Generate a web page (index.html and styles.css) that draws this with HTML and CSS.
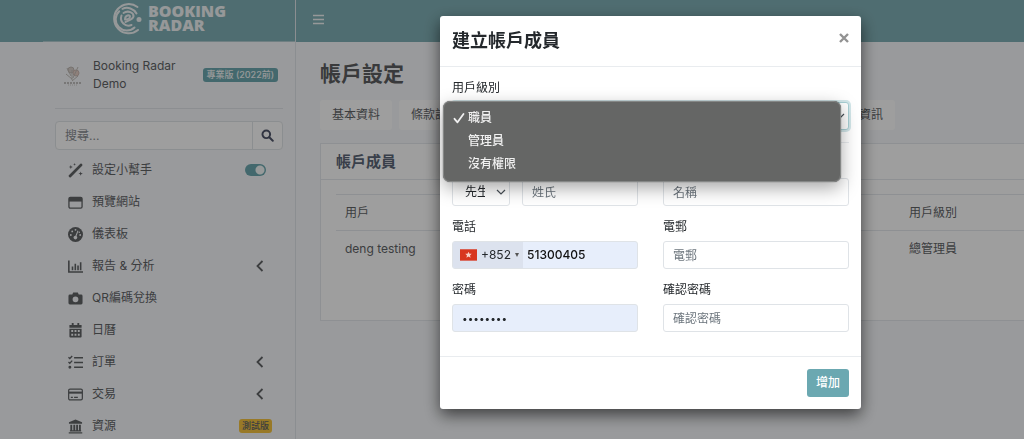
FILE: index.html
```html
<!DOCTYPE html>
<html lang="zh-Hant">
<head>
<meta charset="utf-8">
<title>帳戶設定 - Booking Radar</title>
<link rel="stylesheet" href="styles.css">
</head>
<body>
<div class="app">
  <aside class="sidebar">
    <div class="brand">
      <svg class="brand-mark" viewBox="0 0 30 33" fill="none" stroke="currentColor" stroke-width="2" stroke-linecap="round">
        <path d="M25.500 5A14.600 14.600 0 1 0 26 28"/>
        <path d="M10.500 6.800A11 11 0 0 1 24.500 11.500"/>
        <path d="M7.200 9.200A11 11 0 0 0 22.500 25.500"/>
        <path d="M11.500 11C16 8 22 10.500 21.500 14.500C21 17 17 18.500 13.500 20"/>
        <path d="M9.500 13.500A7.500 7.500 0 0 0 19.500 23"/>
        <path d="M13 17.500C13 13 18 12.500 18 14.500C18 16.500 15 17.500 13 17.500"/>
        <circle cx="27" cy="17.500" r="1.500" fill="currentColor"/>
      </svg>
      <span class="brand-name">BOOKING<br>RADAR</span>
    </div>
    <div class="side-body">
      <div class="profile">
        <svg class="avatar" viewBox="0 0 20 22" fill="none" stroke-width="1">
          <circle cx="8" cy="6" r="3" fill="#d8d0cb" stroke="#c1bab5"/>
          <circle cx="13" cy="9" r="3" fill="#e5cfc6" stroke="#cdbab3"/>
          <path d="M4 4l4 8M15 3l-5 11M3 10l6 5M9 6v10M15 12l-6 5" stroke="#c2bdb8"/>
          <path d="M1 19h18" stroke="#8d8783" stroke-dasharray="2 1"/>
          <path d="M5 21h10" stroke="#d0cbc8" stroke-dasharray="1 1"/>
        </svg>
        <span class="profile-name">Booking Radar Demo</span>
        <span class="badge badge-teal">專業版 (2022前)</span>
      </div>
      <form class="search">
        <input type="text" placeholder="搜尋..." aria-label="搜尋">
        <button type="button" aria-label="搜尋"><svg viewBox="0 0 16 16" fill="none" stroke="currentColor" stroke-width="2.400" stroke-linecap="round"><circle cx="6.500" cy="6.500" r="4.700"/><path d="M10.200 10.200l4.300 4.300"/></svg></button>
      </form>
      <nav class="menu">
        <div class="menu-item">
          <svg viewBox="0 0 16 16" fill="currentColor"><path d="M.9 13L13.200.9a1 1 0 0 1 1.400 0l.5.500a1 1 0 0 1 0 1.400L3 15.100a1 1 0 0 1-1.400 0l-.7-.7a1 1 0 0 1 0-1.400z"/><path d="M3 2l.6 1.600L5.200 4.200l-1.600.6L3 6.400l-.6-1.600L.8 4.200l1.600-.6zM7 0l.4 1.100 1.100.4-1.100.4L7 3l-.4-1.100-1.100-.4 1.100-.4zM13.500 9l.6 1.700 1.700.6-1.700.6-.6 1.700-.6-1.700-1.700-.6 1.700-.6z"/></svg>
          <label class="menu-text" for="helper">設定小幫手</label>
          <input class="toggle" type="checkbox" role="switch" id="helper" checked>
        </div>
        <a class="menu-item" href="#"><svg viewBox="0 0 16 16"><rect x="1" y="2.500" width="14" height="11.500" rx="1.500" fill="none" stroke="currentColor" stroke-width="1.400"/><path d="M1 3h14v4H1z" fill="currentColor"/></svg><span class="menu-text">預覽網站</span></a>
        <a class="menu-item" href="#"><svg viewBox="0 0 16 16"><circle cx="8" cy="8" r="8" fill="currentColor"/><g fill="#f8fafc"><circle cx="3" cy="8.500" r="1"/><circle cx="4.500" cy="4.700" r="1"/><circle cx="8" cy="3" r="1"/><circle cx="13" cy="8.500" r="1"/><circle cx="12" cy="5.500" r=".8"/><path d="M10.200 3.800l.9.4-2 5.400a2 2 0 1 1-1.200-.4z"/></g></svg><span class="menu-text">儀表板</span></a>
        <a class="menu-item" href="#"><svg viewBox="0 0 16 16" fill="none" stroke="currentColor" stroke-width="1.700"><path d="M.9 1.500v12.400H16M4.800 8v4M7.800 5v7M10.700 7v5M13.500 3.500V12"/></svg><span class="menu-text">報告 &amp; 分析</span><svg class="chevron" viewBox="0 0 8 12"><path d="M6.500 1L1.500 6l5 5"/></svg></a>
        <a class="menu-item" href="#"><svg viewBox="0 0 16 16" fill="currentColor" fill-rule="evenodd"><path d="M5.500 1.500h5l.9 2.200H14A1.500 1.500 0 0 1 15.500 5.200v7.600a1.500 1.500 0 0 1-1.500 1.500H2A1.500 1.500 0 0 1 .5 12.800V5.200A1.500 1.500 0 0 1 2 3.700h2.600zM8 5.800a3.100 3.100 0 1 0 0 6.200 3.100 3.100 0 0 0 0-6.200z"/></svg><span class="menu-text">QR編碼兌換</span></a>
        <a class="menu-item" href="#"><svg viewBox="0 0 16 16"><path d="M1.500 2h13v3h-13zM4 0h2v3H4zM10 0h2v3h-2zM1.500 6h13v8.500a1 1 0 0 1-1 1h-11a1 1 0 0 1-1-1z" fill="currentColor"/><path d="M3.500 7.500h2v2h-2zM7 7.500h2v2H7zM10.500 7.500h2v2h-2zM3.500 11.500h2v2h-2zM7 11.500h2v2H7zM10.500 11.500h2v2h-2z" fill="#f8fafc"/></svg><span class="menu-text">日曆</span></a>
        <a class="menu-item" href="#"><svg viewBox="0 0 16 16" fill="none" stroke="currentColor" stroke-width="1.700"><path d="M6.500 3H16M6.500 8H16M6.500 13H16"/><path d="M.5 2.500l1.400 1.300L4.500 1M.5 7.500l1.400 1.300L4.500 6" stroke-width="1.400"/><circle cx="2" cy="13" r=".7"/></svg><span class="menu-text">訂單</span><svg class="chevron" viewBox="0 0 8 12"><path d="M6.500 1L1.500 6l5 5"/></svg></a>
        <a class="menu-item" href="#"><svg viewBox="0 0 16 16" fill="none" stroke="currentColor"><rect x=".7" y="2.200" width="14.600" height="11.600" rx="1.500" stroke-width="1.300"/><path d="M1 6h14" stroke-width="2.200"/><path d="M3 11h2.200M6.500 11h4" stroke-width="1.300"/></svg><span class="menu-text">交易</span><svg class="chevron" viewBox="0 0 8 12"><path d="M6.500 1L1.500 6l5 5"/></svg></a>
        <a class="menu-item" href="#"><svg viewBox="0 0 16 16" fill="currentColor"><path d="M8 .5l7 3V5H1V3.500zM2.500 6h2v6h-2zM5.700 6h2v6h-2zM8.700 6h2v6h-2zM11.700 6h2v6h-2zM2 12h12v1.300H2zM.8 14h14.400v1.500H.8z"/></svg><span class="menu-text">資源</span><span class="badge badge-yellow">測試版</span></a>
      </nav>
    </div>
  </aside>
  <div class="page">
    <header class="topbar"><button type="button" class="burger" aria-label="選單"><svg viewBox="0 0 12 12" stroke="currentColor" stroke-width="1.500"><path d="M0 2.500h11M0 6.500h11M0 10.500h11"/></svg></button></header>
    <main class="content">
      <h1>帳戶設定</h1>
      <nav class="tabs"><a href="#">基本資料</a><a href="#">條款設定</a><a class="tab-last" href="#">資訊</a></nav>
      <section class="card">
        <h2>帳戶成員</h2>
        <table>
          <thead><tr><th class="col-user">用戶</th><th>用戶級別</th></tr></thead>
          <tbody><tr><td>deng testing</td><td>總管理員</td></tr></tbody>
        </table>
      </section>
    </main>
  </div>
</div>

<div class="overlay">
  <form class="modal" role="dialog" aria-labelledby="modal-title">
    <header class="modal-head">
      <h2 id="modal-title">建立帳戶成員</h2>
      <button type="button" class="close" aria-label="關閉"><svg viewBox="0 0 10 10" stroke="currentColor" stroke-width="2.400"><path d="M1 1l8 8M9 1L1 9"/></svg></button>
    </header>
    <div class="modal-body">
      <div class="field level">
        <label for="level">用戶級別</label>
        <select id="level" class="control focused"><option>職員</option></select>
        <ul class="options" role="listbox" aria-label="用戶級別">
          <li role="option" aria-selected="true"><svg viewBox="0 0 12 12" fill="none" stroke="currentColor" stroke-width="1.800" stroke-linecap="round" stroke-linejoin="round"><path d="M1.500 6.800l3 3.500L10.500 2"/></svg>職員</li>
          <li role="option">管理員</li>
          <li role="option">沒有權限</li>
        </ul>
      </div>
      <hr>
      <div class="grid">
        <div class="field name-field">
          <div class="name-row">
            <select class="control salutation" aria-label="稱謂"><option>先生</option></select>
            <input class="control" type="text" placeholder="姓氏" aria-label="姓氏">
          </div>
        </div>
        <div class="field name-field"><input class="control" type="text" placeholder="名稱" aria-label="名稱"></div>
        <div class="field">
          <label for="phone">電話</label>
          <div class="control phone filled">
            <button type="button" class="country">
              <svg viewBox="0 0 18 12"><path d="M0 0h18v12H0z" fill="#d8361f"/><path d="M9 2.500l1 2.100 2.400.2-1.800 1.600.6 2.400L9 7.600 6.800 8.800l.6-2.400-1.800-1.600L8 4.600z" fill="#f7cfc6"/></svg>
              <span>+852</span><i class="caret"></i>
            </button>
            <input id="phone" type="tel" value="51300405">
          </div>
        </div>
        <div class="field"><label for="email">電郵</label><input id="email" class="control" type="email" placeholder="電郵"></div>
        <div class="field"><label for="pw">密碼</label><input id="pw" class="control filled secret" type="password" value="password"></div>
        <div class="field"><label for="pw2">確認密碼</label><input id="pw2" class="control" type="password" placeholder="確認密碼"></div>
      </div>
    </div>
    <footer class="modal-foot"><button type="button" class="submit">增加</button></footer>
  </form>
</div>
</body>
</html>
```

FILE: styles.css
```css
* { box-sizing: border-box; }
body, h1, h2, ul { margin: 0; padding: 0; }
body {
  font-family: Inter, "Noto Sans CJK TC", sans-serif;
  font-size: 12px;
  line-height: 18px;
  color: #626467;
  background: #f7f9fc;
  overflow: hidden;
}
button, input, select { font: inherit; color: inherit; }
button { border: 0; background: none; padding: 0; }
a { color: inherit; text-decoration: none; }
svg { display: block; flex: none; }
::placeholder { color: #6c757d; opacity: 1; }

.app { display: flex; height: 100vh; background: linear-gradient(#80b0b6 42px, #f7f9fc 42px); }
.sidebar { flex: none; width: 253px; margin-left: 43px; border-right: 1px solid #e1e6ea; }
.brand {
  display: flex; align-items: center; justify-content: center; gap: 6px;
  height: 42px; padding-bottom: 5px; border-bottom: 1px solid #b4ced2; color: #f3f6f7;
}
.brand-mark { width: 30px; height: 33px; }
.brand-name { font-family: "Open Sans", sans-serif; font-weight: 800; font-size: 16px; line-height: 14px; }
.side-body { padding: 0 12px; }
.profile {
  display: flex; align-items: center; gap: 10px;
  height: 67px; padding: 0 5px 0 8px; border-bottom: 1px solid #e2e6ea;
}
.avatar { width: 20px; height: 22px; }
.profile-name { flex: 1; }
.badge { border-radius: 3px; font-size: 9px; line-height: 14px; font-weight: 500; white-space: nowrap; }
.badge-teal { padding: 0 4px; background: #6da9b0; color: #f3f6f7; }
.badge-yellow { padding: 0 3px; background: #f5c440; }
.search { display: flex; height: 29px; margin-top: 12px; border: 1px solid #e1e5e8; border-radius: 4px; background: #fff; }
.search input { flex: 1; min-width: 0; border: 0; background: none; padding: 0 9px; }
.search input::placeholder { color: #8a8d92; }
.search button { width: 30px; border-left: 1px solid #e1e5e8; color: #50566b; display: grid; place-items: center; }
.search svg { width: 13px; height: 13px; }
.menu { padding: 4px 6px 0 13px; }
.menu-item { display: flex; align-items: center; gap: 9px; height: 32px; }
.menu-item > svg { width: 15px; height: 15px; }
.menu-text { flex: 1; }
.menu-item .chevron { width: 8px; height: 12px; margin-right: 13px; fill: none; stroke: currentColor; stroke-width: 1.800; }
.menu-item .badge { margin-right: 5px; }
.toggle {
  appearance: none; width: 21px; height: 12px; margin: 0 11px 0 0; border-radius: 6px;
  background: radial-gradient(circle at 15px 6px, #f4f8f8 4px, transparent 5px) #6da9b0;
}

.page { flex: 1; min-width: 0; }
.topbar { height: 42px; padding: 12px 17px; color: #f3f6f7; }
.burger svg { width: 12px; height: 12px; }
.content { padding: 16px 0 0 24px; }
h1 { font-size: 21px; line-height: 32px; font-weight: 700; color: #5c5e61; }
.tabs { display: flex; gap: 7px; margin-top: 10px; }
.tabs a { padding: 6px 12px; border-radius: 3px; background: #fff; }
.tabs .tab-last { margin-left: 369px; }
.card { height: 178px; margin-top: 13px; border: 1px solid #e5e9ed; border-right: 0; background: #fff; }
.card h2 { padding: 0 15px; font-size: 15px; line-height: 35px; font-weight: 600; color: #5c6778; border-bottom: 1px solid #e5e9ed; }
.card table { width: calc(100% - 15px); margin: 14px 0 0 15px; border-collapse: collapse; table-layout: fixed; }
.card th, .card td { height: 36px; padding: 0 9px; text-align: left; font-weight: 400; border-top: 1px solid #e5e9ed; }
.col-user { width: 564px; }

.overlay {
  position: fixed; inset: 0; display: flex; justify-content: center; align-items: flex-start;
  padding: 16px 0 0 277px; background: rgba(0, 0, 0, .38);
}
.modal { width: 421px; border-radius: 3px; background: #fff; color: #24282c; box-shadow: 0 6px 16px rgba(0, 0, 0, .6); }
.modal-head { display: flex; justify-content: space-between; padding: 12px; border-bottom: 1px solid #e9ecef; }
.modal-head h2 { font-size: 18px; line-height: 26px; font-weight: 700; }
.close { align-self: center; color: #929292; padding-bottom: 6px; }
.close svg { width: 10px; height: 10px; }
.modal-body { padding: 12px; }
.field { display: flex; flex-direction: column; gap: 5px; min-width: 0; margin-bottom: 12px; }
.control { width: 100%; min-width: 0; height: 28px; padding: 0 9px; border: 1px solid #dfe3e7; border-radius: 3px; background: #fff; outline: 0; }
select.control {
  appearance: none; padding: 0 24px 0 12px; overflow: hidden;
  background: #fff url("data:image/svg+xml,%3Csvg xmlns='http://www.w3.org/2000/svg' viewBox='0 0 10 6'%3E%3Cpath d='M1 1l4 4 4-4' fill='none' stroke='%23495057' stroke-width='1.2'/%3E%3C/svg%3E") no-repeat right 3px center / 10px 6px;
}
select.focused { border-color: #a9d0d5; box-shadow: 0 0 0 2px #d3e7ea; }
.level { position: relative; }
.options {
  position: absolute; left: -9px; right: 8px; top: 22px; padding: 4px 0 6px; list-style: none;
  border: 1px solid #858786; border-radius: 7px; background: #656665; color: #f1f1f1; font-weight: 500;
  box-shadow: 0 0 1px #333, 0 6px 18px rgba(0, 0, 0, .35);
}
.options li { display: flex; align-items: center; height: 23px; padding-left: 24px; }
.options li svg { width: 12px; height: 12px; margin: 0 3px 0 -15px; }
hr { height: 1px; margin: 0 0 12px; border: 0; background: #e9ecef; }
.grid { display: grid; grid-template-columns: 1fr 1fr; column-gap: 25px; }
.name-field { padding-top: 23px; }
.name-row { display: flex; gap: 12px; }
.salutation { flex: none; width: 58px; }
.filled { background: #e7eefb; }
.secret { font-size: 10px; }
.phone { display: flex; padding: 0; overflow: hidden; }
.phone input { flex: 1; min-width: 0; border: 0; padding: 0 4px; background: none; outline: 0; color: #111; font-weight: 500; }
.country { display: flex; align-items: center; gap: 4px; padding: 0 4px 0 7px; background: #dce2ee; }
.country svg { width: 17px; height: 12px; }
.caret { border: 2px solid transparent; border-top: 4px solid #555; border-bottom: 0; }
.modal-foot { display: flex; justify-content: flex-end; padding: 12px; border-top: 1px solid #e9ecef; }
.submit { padding: 5px 9px; border-radius: 3px; background: #6ba8b1; color: #fff; font-weight: 500; }
```
